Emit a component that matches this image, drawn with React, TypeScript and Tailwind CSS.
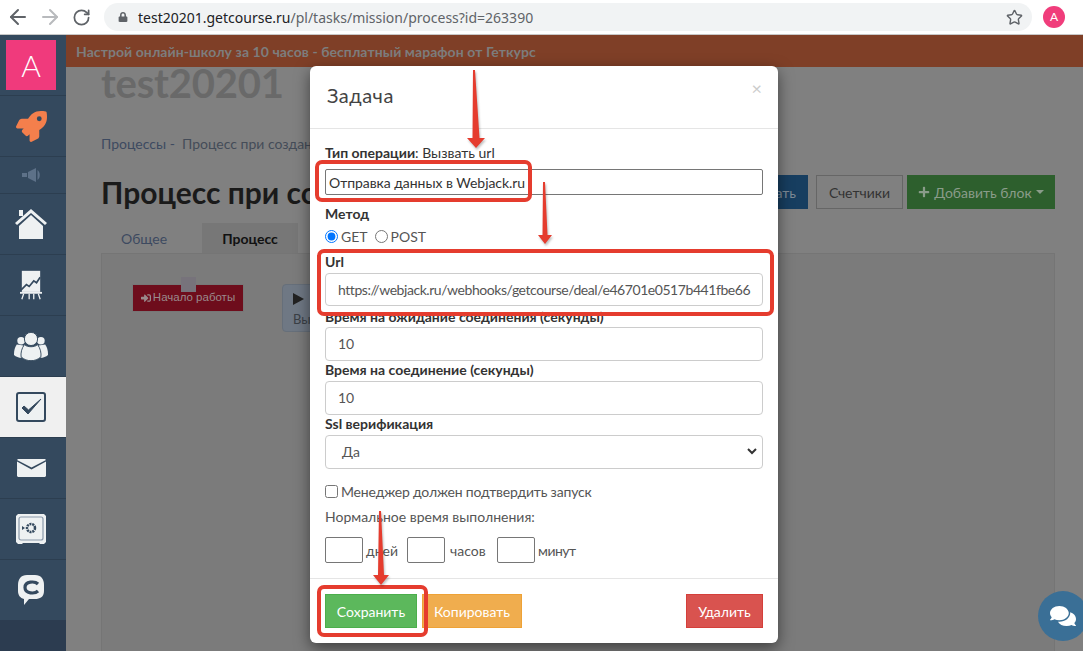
import React from "react";
import { ArrowLeft, ArrowRight, RotateCw, Star } from "lucide-react";
import { FaRocket, FaComments, FaPlus, FaLock, FaSignInAlt } from "react-icons/fa";

const F = "[font-family:Lato,'Open_Sans',sans-serif]";

function Home() {
  return (
    <svg width="32" height="31" viewBox="0 0 32 31" fill="#eef1f2">
      <rect x="4" y="1" width="4" height="6" />
      <path d="M16 0 L32 14 L30 16 L16 4 L2 16 L0 14 Z" />
      <path d="M16 6 L28 17 V30 H4 V17 Z" />
    </svg>
  );
}
function Chart() {
  return (
    <svg width="22" height="31" viewBox="0 0 24 32">
      <rect x="2" y="0" width="20" height="23" fill="#eef1f2" />
      <path d="M1 21 L7 15 L10 17 L15 11 L18 13 L22 7" stroke="#34495e" strokeWidth="1.8" fill="none" />
      <rect x="0" y="23" width="24" height="2" fill="#eef1f2" />
      <path d="M4 25 L2 31 M10 25 V31 M15 25 V31 M20 25 L22 31" stroke="#eef1f2" strokeWidth="1.4" />
    </svg>
  );
}
function Users() {
  return (
    <svg width="34" height="29" viewBox="0 0 36 30" fill="#eef1f2">
      <circle cx="7.5" cy="9" r="4" />
      <circle cx="28.5" cy="9" r="4" />
      <path d="M3 13 C0 17 0 22 0 24 C2 26 5 27 8 27 L10 14 Z" />
      <path d="M33 13 C36 17 36 22 36 24 C34 26 31 27 28 27 L26 14 Z" />
      <circle cx="18" cy="7" r="7" stroke="#34495e" strokeWidth="1" />
      <path d="M11 13 C8 17 7 22 7.5 26 C11 29 14 30 18 30 C22 30 25 29 28.5 26 C29 22 28 17 25 13 C22 16 14 16 11 13 Z" stroke="#34495e" strokeWidth="1" />
    </svg>
  );
}
function Check() {
  return (
    <svg width="30" height="30" viewBox="0 0 30 30">
      <rect x="1" y="1" width="28" height="28" rx="2" fill="#eef1f2" stroke="#34495e" strokeWidth="2" />
      <path d="M6 16 L12 22 L25 7 L12.5 18 L8 14 Z" fill="#34495e" stroke="#34495e" strokeWidth="1" />
    </svg>
  );
}
function Mail() {
  return (
    <svg width="29" height="18" viewBox="0 0 29 18" fill="#eef1f2">
      <path d="M1 0 H28 L29 1 L14.5 8.5 L0 1 Z" />
      <path d="M0 2.5 L14.5 10.5 L29 2.5 V17 L28 18 H1 L0 17 Z" />
    </svg>
  );
}
function Safe() {
  return (
    <svg width="30" height="30" viewBox="0 0 30 30">
      <path d="M2 0 H28 L30 2 V28 L28 30 H24 L23 29 H7 L6 30 H2 L0 28 V2 Z" fill="#eef1f2" />
      <rect x="3" y="3" width="24" height="23" rx="2" fill="none" stroke="#8a99aa" strokeWidth="1.2" />
      <circle cx="15" cy="14" r="4" fill="none" stroke="#34495e" strokeWidth="2.5" strokeDasharray="2 0.8" />
      <path d="M6 12 L9 14 L6 16 Z" fill="#34495e" />
    </svg>
  );
}
function ChatC() {
  return (
    <svg width="26" height="30" viewBox="0 0 26 30">
      <path d="M9 0 H17 C23 0 26 4 26 10 V16 C26 22 22 24 17 24 H11 L6 30 L6 24 C2 23 0 20 0 16 V10 C0 4 3 0 9 0 Z" fill="#eef1f2" />
      <path d="M20 9 C17 6 7 6 7 12.5 C7 19 17 19 20 16" fill="none" stroke="#34495e" strokeWidth="3.2" />
    </svg>
  );
}

function Item({ h, children, active }: { h: string; children: React.ReactNode; active?: boolean }) {
  return (
    <div className={`${h} flex items-center justify-center pr-[4px] border-b border-[#2c3e50] ${active ? "bg-[#f0f0f0]" : ""}`}>{children}</div>
  );
}

function Label({ children }: { children: React.ReactNode }) {
  return <div className="text-[14px] leading-[20px] font-bold text-[#333]">{children}</div>;
}

function TextBox({ value }: { value: string }) {
  return (
    <div className="h-[34px] rounded border border-[#ccc] bg-white pl-[12px] pb-[1px] flex items-center text-[14px] text-[#555]">{value}</div>
  );
}

function SmallBox() {
  return <div className="w-[38px] h-[26px] rounded-[2px] border border-[#767676] bg-white" />;
}

function Arrow({ x1, y1, x2, y2, base, head, len }: { x1: number; y1: number; x2: number; y2: number; base: number; head: number; len: number }) {
  return (
    <path
      d={`M${x1 - 1} ${y1} L${x1 + 1} ${y1} L${x2 + base} ${y2 - len} L${x2 + head} ${y2 - len} L${x2} ${y2} L${x2 - head} ${y2 - len} L${x2 - base} ${y2 - len} Z`}
      fill="#e53c2e"
    />
  );
}

export default function App() {
  return (
    <div className={`relative w-[1083px] h-[651px] overflow-hidden flex flex-col bg-[#808080] ${F}`}>
      <header className="h-[35px] shrink-0 bg-white border-b border-[#c8c8c8] flex items-center pl-[6px]">
        <ArrowLeft size={24} strokeWidth={2} className="text-[#5f6368]" />
        <ArrowRight size={24} strokeWidth={2} className="text-[#b8babd] ml-[8px]" />
        <RotateCw size={19} strokeWidth={2.2} className="text-[#5f6368] ml-[10px]" />
        <div className="ml-[13px] w-[928px] h-[28px] rounded-full bg-[#f1f3f4] flex items-center pl-[14px] pr-[9px]">
          <FaLock size={10} className="text-[#5f6368]" />
          <span className="ml-[10px] text-[14px] text-[#202124] [font-family:'Noto_Sans',sans-serif]">
            test20201.getcourse.ru<span className="text-[#5f6368]">/pl/tasks/mission/process?id=263390</span>
          </span>
          <Star size={17} strokeWidth={2} className="ml-auto text-[#5f6368]" />
        </div>
        <div className="ml-[11px] w-[22px] h-[22px] rounded-full bg-[#f03d7b] text-white text-[12px] flex items-center justify-center">A</div>
      </header>

      <div className="flex flex-1 min-h-0">
        <aside className="w-[66px] shrink-0 bg-[#34495e] flex flex-col">
          <div className="h-[61px] flex items-start pl-[6px] pt-[5px] border-b border-[#2c3e50]">
            <div className="w-[50px] h-[50px] bg-[#f03a7c] text-white text-[30px] flex items-center justify-center font-light">A</div>
          </div>
          <Item h="h-[61px]"><FaRocket size={31} className="text-[#f47f4c]" /></Item>
          <Item h="h-[37px]">
            <svg width="19" height="14" viewBox="0 0 19 14" fill="#5d7188">
              <rect x="0" y="5" width="5" height="4" />
              <path d="M6 4 L14 0 V14 L6 10 Z" />
              <path d="M15.5 2 C18.5 4 18.5 10 15.5 12 Z" />
            </svg>
          </Item>
          <Item h="h-[61px]"><Home /></Item>
          <Item h="h-[61px]"><Chart /></Item>
          <Item h="h-[61px]"><Users /></Item>
          <Item h="h-[61px]" active><Check /></Item>
          <Item h="h-[61px]"><Mail /></Item>
          <Item h="h-[61px]"><Safe /></Item>
          <div className="h-[60px] flex items-center justify-center pr-[4px]"><ChatC /></div>
          <div className="flex-1 bg-[#2c3c50]" />
        </aside>

        <main className="flex-1 min-w-0 flex flex-col">
          <div className="h-[32px] shrink-0 bg-[#7f3f27] pl-[10px] flex items-center text-[14px] tracking-[0.07px] font-bold text-[#7d7d7d]">
            Настрой онлайн-школу за 10 часов - бесплатный марафон от Геткурс
          </div>
          <div className="flex-1 min-h-0 pl-[35px] pr-[28px] flex flex-col">
            <div className="h-[34px] text-[40px] leading-[32px] tracking-[-0.2px] font-bold text-[#696969]">test20201</div>
            <div className="mt-[33px] text-[14px] leading-[20px] text-[#3d4a60] whitespace-nowrap">
              Процессы -&nbsp; <span className="text-[#444c58]">Процесс при создан</span>
            </div>
            <div className="mt-[21px] h-[48px] flex items-start justify-between">
              <div className="text-[30px] leading-[36px] -mt-px font-bold text-[#1a1a1a] whitespace-nowrap">Процесс при со</div>
              <div className="flex items-center shrink-0">
                <div className="h-[34px] w-[38px] bg-[#173e60] flex items-center justify-end pr-[12px] text-[14px] text-[#7d8a96]">ать</div>
                <div className="ml-[8px] h-[34px] w-[87px] border border-[#666] text-[#333] text-[14px] flex items-center justify-center">Счетчики</div>
                <div className="ml-[4px] h-[34px] w-[148px] bg-[#2d5f2d] text-[#8a9c8a] text-[14px] flex items-center justify-center gap-[4px]">
                  <FaPlus size={12} />Добавить блок
                  <span className="w-0 h-0 border-x-[4px] border-x-transparent border-t-[4px] border-t-[#8a9c8a]" />
                </div>
              </div>
            </div>
            <div className="flex h-[30px] text-[14px]">
              <div className="w-[101px] pl-[20px] flex items-center text-[#3d4a60]">Общее</div>
              <div className="w-[96px] bg-[#777] flex items-center justify-center font-bold text-[#111]">Процесс</div>
            </div>
            <div className="flex-1 bg-[#7b7b7b] border-x border-t border-[#757575] pl-[30px] pt-[30px] flex items-start gap-[38px]">
              <div className="relative w-[112px] h-[28px] bg-[#6e0d1c] border border-[#777] flex items-center justify-center gap-[2px] text-[11.5px] text-[#9a8a8c] [font-family:'Liberation_Sans',sans-serif]">
                <span className="absolute left-[48px] top-[-8px] w-[15px] h-[15px] bg-[#77737b]" />
                <FaSignInAlt size={10} />Начало работы
              </div>
              <div className="w-[120px] h-[48px] rounded border border-[#666f7a] bg-[#6f7884] pl-[10px] pt-[8px] text-[13px] text-[#3a3f46]">
                <svg width="11" height="12" viewBox="0 0 11 12" fill="#222"><path d="M0 0 L11 6 L0 12 Z" /></svg>
                <div className="mt-[5px]">Вы</div>
              </div>
            </div>
          </div>
        </main>
      </div>

      {/* modal */}
      <div className="absolute left-[310px] top-[66px] w-[468px] h-[577px] bg-white rounded-[6px] shadow-[0_5px_15px_rgba(0,0,0,0.5)] flex flex-col">
        <div className="h-[63px] shrink-0 border-b border-[#e5e5e5] flex items-center justify-between pl-[17px] pr-[16px] pb-[4px]">
          <span className="text-[20px] tracking-[0.5px] text-[#444]">Задача</span>
          <span className="text-[18px] text-[#ccc] mb-[14px]">×</span>
        </div>
        <div className="flex-1 px-[15px] pt-[14px] flex flex-col">
          <div className="text-[14px] leading-[20px] text-[#333]"><b>Тип операции</b>: Вызвать url</div>
          <div className="mt-[6px] h-[26px] rounded-[2px] border border-[#767676] pl-[3px] flex items-center text-[14px] tracking-[-0.05px] text-[#333]">Отправка данных в Webjack.ru</div>
          <div className="mt-[9px]"><Label>Метод</Label></div>
          <div className="mt-[2px] h-[20px] flex items-center text-[14px] text-[#555]">
            <input type="radio" readOnly checked className="w-[13px] h-[13px] m-0" />
            <span className="ml-[3px]">GET</span>
            <input type="radio" readOnly checked={false} className="w-[13px] h-[13px] m-0 ml-[7px]" />
            <span className="ml-[3px]">POST</span>
          </div>
          <div className="mt-[6px]"><Label>Url</Label></div>
          <div className="mt-[1px] h-[33px] rounded border border-[#ccc] pl-[12px] pr-[12px] flex items-center text-[14px] tracking-[-0.44px] text-[#555] whitespace-nowrap">
            https://webjack.ru/webhooks/getcourse/deal/e46701e0517b441fbe66
          </div>
          <div className="mt-[1px]"><Label>Время на ожидание соединения (секунды)</Label></div>
          <TextBox value="10" />
          <div className="-translate-y-px"><Label>Время на соединение (секунды)</Label></div>
          <TextBox value="10" />
          <div className="-translate-y-px"><Label>Ssl верификация</Label></div>
          <div className="h-[34px] rounded border border-[#ccc] pl-[16px] pr-[5px] pb-[1px] flex items-center justify-between text-[14px] text-[#555]">
            Да
            <svg width="10" height="7" viewBox="0 0 10 7"><path d="M1 1 L5 5 L9 1" stroke="#333" strokeWidth="2" fill="none" /></svg>
          </div>
          <div className="mt-[12px] h-[20px] flex items-center text-[14px] tracking-[-0.18px] text-[#555]">
            <input type="checkbox" readOnly className="w-[13px] h-[13px] m-0" />
            <span className="ml-[3px]">Менеджер должен подтвердить запуск</span>
          </div>
          <div className="mt-[6px] text-[14px] leading-[20px] text-[#555]">Нормальное время выполнения:</div>
          <div className="mt-[10px] flex items-center text-[14px] text-[#555]">
            <SmallBox /><span className="ml-[3px] w-[41px]">дней</span>
            <SmallBox /><span className="ml-[5px] w-[47px]">часов</span>
            <SmallBox /><span className="ml-[3px] tracking-[-0.5px]">минут</span>
          </div>
        </div>
        <div className="h-[65px] shrink-0 border-t border-[#e5e5e5] px-[15px] pt-[15px] flex items-start text-[14px] text-white">
          <div className="w-[92px] h-[34px] bg-[#5cb85c] border border-[#4cae4c] flex items-center justify-center">Сохранить</div>
          <div className="ml-[5px] w-[100px] h-[34px] bg-[#f0ad4e] border border-[#eea236] flex items-center justify-center">Копировать</div>
          <div className="ml-auto w-[77px] h-[34px] bg-[#d9534f] border border-[#d43f3a] flex items-center justify-center">Удалить</div>
        </div>
      </div>

      {/* annotations */}
      <div className="absolute left-[315px] top-[160px] w-[217px] h-[42px] border-[4px] border-[#e53c2e] rounded-[7px]" />
      <div className="absolute left-[317px] top-[249px] w-[457px] h-[67px] border-[4px] border-[#e53c2e] rounded-[7px]" />
      <div className="absolute left-[317px] top-[585px] w-[111px] h-[52px] border-[4px] border-[#e53c2e] rounded-[7px]" />
      <svg className="absolute left-0 top-0 pointer-events-none drop-shadow-[1px_2px_1px_rgba(0,0,0,0.25)]" width="1083" height="651">
        <Arrow x1={474} y1={70} x2={476} y2={148} base={3.5} head={9} len={10} />
        <Arrow x1={544} y1={182} x2={545} y2={244} base={2.5} head={7} len={9} />
        <Arrow x1={380} y1={511} x2={381} y2={585} base={3} head={8} len={10} />
      </svg>

      <div className="absolute left-[1038px] top-[591px] w-[50px] h-[50px] rounded-full bg-[#3a6f96] flex items-center justify-center">
        <FaComments size={26} className="text-white" />
      </div>
    </div>
  );
}
